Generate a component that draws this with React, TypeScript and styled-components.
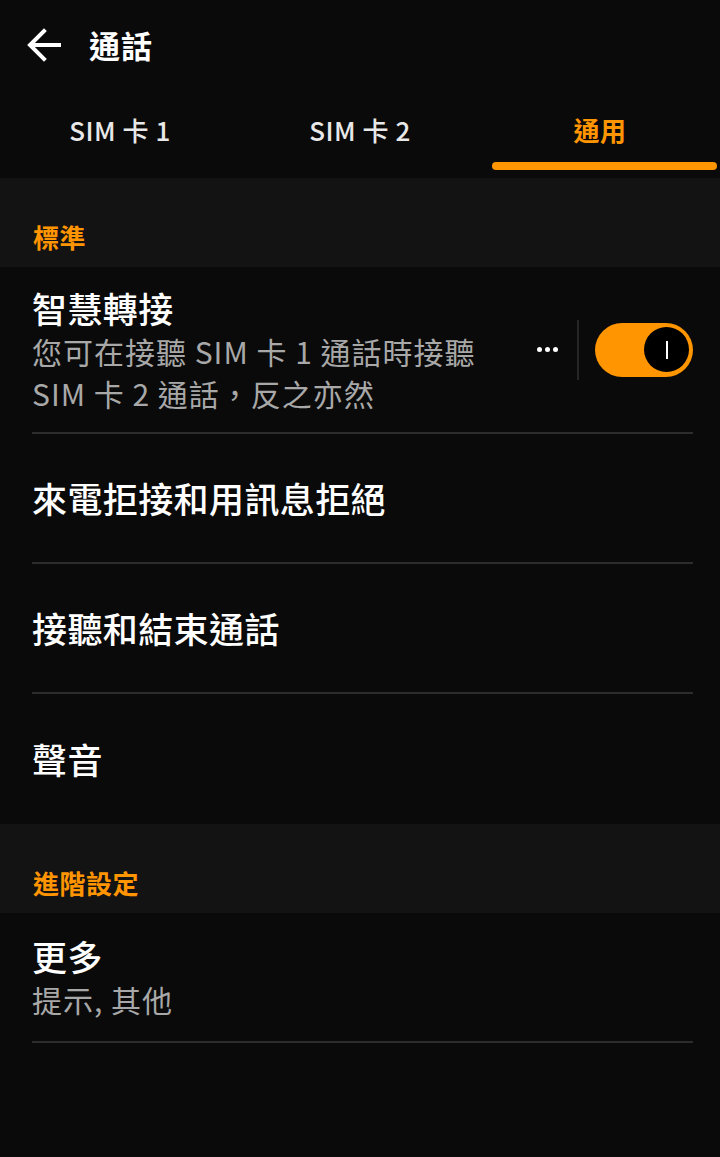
import React from "react";
import styled, { createGlobalStyle } from "styled-components";

const Global = createGlobalStyle`
  html, body { margin: 0; padding: 0; background: #0a0a0a; }
  body { font-family: "Noto Sans CJK TC", "Noto Sans", sans-serif; color: #fff; }
`;

const Page = styled.div`
  width: 720px;
  min-height: 1157px;
  background: #0a0a0a;
  display: flex;
  flex-direction: column;
`;

const Header = styled.header`
  height: 90px;
  display: flex;
  align-items: center;
  padding-left: 26px;
  gap: 27px;
  box-sizing: border-box;
`;

const Title = styled.h1`
  margin: 0;
  font-size: 31px;
  font-weight: 700;
  letter-spacing: 1px;
  line-height: 1;
  color: #fff;
  padding-bottom: 2px;
`;

const Tabs = styled.nav`
  height: 88px;
  display: grid;
  grid-template-columns: 240px 240px 240px;
`;

const Tab = styled.div<{ $active?: boolean }>`
  position: relative;
  display: flex;
  justify-content: center;
  padding-top: 22px;
  font-size: 26px;
  line-height: 36px;
  letter-spacing: 0.5px;
  font-weight: ${(p) => (p.$active ? 700 : 500)};
  color: ${(p) => (p.$active ? "#ff9500" : "#e8e8e8")};
  box-sizing: border-box;
`;

const Indicator = styled.span`
  position: absolute;
  left: 12px;
  right: 3px;
  bottom: 8px;
  height: 8px;
  border-radius: 4px;
  background: #ff9500;
`;

const SectionHeader = styled.div`
  height: 89px;
  background: #131313;
  display: flex;
  align-items: flex-end;
  padding: 0 0 10px 33px;
  box-sizing: border-box;
  font-size: 26px;
  line-height: 40px;
  font-weight: 700;
  letter-spacing: 0.5px;
  color: #ff9500;
`;

const List = styled.div`
  display: flex;
  flex-direction: column;
`;

const Item = styled.div<{ $divider?: boolean; $height?: number }>`
  margin: 0 27px 0 32px;
  min-height: ${(p) => p.$height ?? 130}px;
  display: flex;
  align-items: center;
  box-sizing: border-box;
  border-bottom: ${(p) => (p.$divider ? "2px solid #2c2c2c" : "none")};
`;

const ItemText = styled.div`
  flex: 1;
  display: flex;
  flex-direction: column;
`;

const ItemTitle = styled.div`
  font-size: 35px;
  line-height: 44px;
  font-weight: 500;
  letter-spacing: 0.4px;
  color: #fff;
`;

const ItemSub = styled.div`
  font-size: 30px;
  line-height: 42px;
  font-weight: 400;
  letter-spacing: 1px;
  color: #a8a8a8;
`;

const Controls = styled.div`
  display: flex;
  align-items: center;
`;

const Dots = styled.div`
  width: 30px;
  display: flex;
  justify-content: center;
  gap: 3px;
  margin-right: 15px;
  span {
    width: 5px;
    height: 5px;
    border-radius: 50%;
    background: #fff;
  }
`;

const VDivider = styled.div`
  width: 2px;
  height: 60px;
  background: #262626;
  margin-right: 16px;
`;

const Switch = styled.div`
  width: 98px;
  height: 54px;
  border-radius: 27px;
  background: #ff9500;
  display: flex;
  align-items: center;
  justify-content: flex-end;
  padding-right: 4px;
  box-sizing: border-box;
`;

const Knob = styled.div`
  width: 45px;
  height: 45px;
  border-radius: 50%;
  background: #000;
  display: flex;
  align-items: center;
  justify-content: center;
  span {
    width: 2px;
    height: 18px;
    background: #fff;
  }
`;

const BackIcon = () => (
  <svg width="36" height="36" viewBox="0 0 36 36" fill="none">
    <path d="M33 18H5M18 4L4 18l14 14" stroke="#fff" strokeWidth="4" strokeLinecap="square" />
  </svg>
);

export default function App() {
  return (
    <Page>
      <Global />
      <Header>
        <BackIcon />
        <Title>通話</Title>
      </Header>
      <Tabs>
        <Tab>SIM 卡 1</Tab>
        <Tab>SIM 卡 2</Tab>
        <Tab $active>
          通用
          <Indicator />
        </Tab>
      </Tabs>
      <SectionHeader>標準</SectionHeader>
      <List>
        <Item $divider $height={167}>
          <ItemText>
            <ItemTitle>智慧轉接</ItemTitle>
            <ItemSub>
              您可在接聽 SIM 卡 1 通話時接聽
              <br />
              SIM 卡 2 通話，反之亦然
            </ItemSub>
          </ItemText>
          <Controls>
            <Dots>
              <span />
              <span />
              <span />
            </Dots>
            <VDivider />
            <Switch>
              <Knob>
                <span />
              </Knob>
            </Switch>
          </Controls>
        </Item>
        <Item $divider>
          <ItemTitle>來電拒接和用訊息拒絕</ItemTitle>
        </Item>
        <Item $divider>
          <ItemTitle>接聽和結束通話</ItemTitle>
        </Item>
        <Item>
          <ItemTitle>聲音</ItemTitle>
        </Item>
      </List>
      <SectionHeader>進階設定</SectionHeader>
      <List>
        <Item $divider>
          <ItemText>
            <ItemTitle>更多</ItemTitle>
            <ItemSub>提示, 其他</ItemSub>
          </ItemText>
        </Item>
      </List>
    </Page>
  );
}
